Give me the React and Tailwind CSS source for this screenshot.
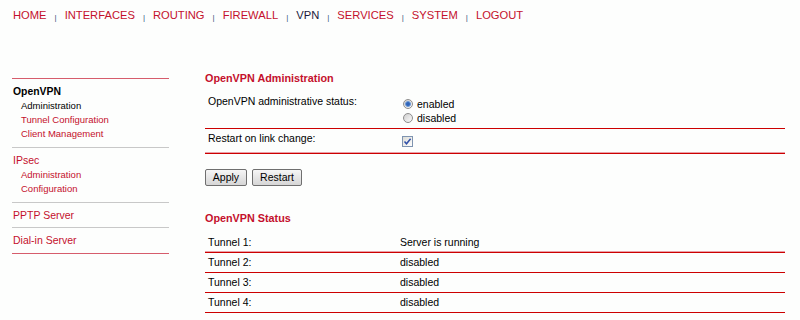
import React, { Fragment } from "react";

const NAV = ["HOME", "INTERFACES", "ROUTING", "FIREWALL", "VPN", "SERVICES", "SYSTEM", "LOGOUT"];

function Radio({ checked }) {
  return (
    <span className="w-[10px] h-[10px] rounded-full border border-[#8e8e8e] bg-gradient-to-br from-[#cfcfcf] to-[#fbfbfb] flex items-center justify-center shrink-0">
      {checked && <span className="w-[6px] h-[6px] rounded-full bg-[#2e64b8] border border-[#6d9ad8]" />}
    </span>
  );
}

function Checkbox() {
  return (
    <span className="w-[11px] h-[11px] border border-[#7f94b0] bg-gradient-to-br from-[#dcdcd6] to-[#ffffff] flex items-center justify-center">
      <svg width="9" height="9" viewBox="0 0 9 9">
        <path d="M1.5 4.5 L3.5 6.8 L7.6 1.8" fill="none" stroke="#2f4fa8" strokeWidth="1.5" />
      </svg>
    </span>
  );
}

function Button({ children, w }) {
  return (
    <button className={`${w} h-[17px] border border-[#6f6f6f] rounded-[2px] bg-gradient-to-b from-[#f6f6f6] to-[#d6d6d6] text-[10.5px] leading-[13px] text-black flex items-center justify-center`}>
      {children}
    </button>
  );
}

export default function App() {
  return (
    <div className="w-[800px] h-[320px] overflow-hidden bg-[#fdfefd] font-['Liberation_Sans',Arial,sans-serif] text-black">
      {/* top nav */}
      <div className="h-[70px] pl-[13px] pt-[8px] flex items-start text-[11.2px] leading-[14px]">
        {NAV.map((n, i) => (
          <Fragment key={n}>
            {i > 0 && (
              <span className="mx-[8px] inline-block translate-y-[3px] text-[8px] leading-[14px] text-[#2f4f80]">|</span>
            )}
            <span className={n === "VPN" ? "text-[#1b1b3c]" : "text-[#c4102c]"}>{n}</span>
          </Fragment>
        ))}
      </div>

      <div className="flex items-start">
        {/* sidebar */}
        <div className="ml-[12px] w-[157px] mt-[8px] border-t border-[#d65c6c]">
          <div className="pt-[5px] pb-[6px] border-b border-[#c8c8c8]">
            <div className="pl-[1px] font-bold text-[10.4px] leading-[15px] text-black">OpenVPN</div>
            <div className="pl-[9px] text-[9.5px] leading-[14px] text-black">Administration</div>
            <div className="pl-[9px] text-[9.5px] leading-[14px] text-[#c4102c]">Tunnel Configuration</div>
            <div className="pl-[9px] text-[9.5px] leading-[14px] text-[#c4102c]">Client Management</div>
          </div>
          <div className="pt-[5px] pb-[6px] border-b border-[#c8c8c8]">
            <div className="pl-[1px] text-[10.5px] leading-[15px] text-[#c4102c]">IPsec</div>
            <div className="pl-[9px] text-[9.5px] leading-[14px] text-[#c4102c]">Administration</div>
            <div className="pl-[9px] text-[9.5px] leading-[14px] text-[#c4102c]">Configuration</div>
          </div>
          <div className="pt-[5px] pb-[5px] border-b border-[#c8c8c8]">
            <div className="pl-[1px] text-[10.5px] leading-[14px] text-[#c4102c]">PPTP Server</div>
          </div>
          <div className="pt-[5px] pb-[6px] border-b border-[#d65c6c]">
            <div className="pl-[1px] text-[10.5px] leading-[14px] text-[#c4102c]">Dial-in Server</div>
          </div>
        </div>

        {/* main */}
        <div className="ml-[36px] w-[580px] text-[10.5px] leading-[13px]">
          <div className="pt-[1px] font-bold text-[10.8px] leading-[14px] text-[#c4102c]">OpenVPN Administration</div>

          <div className="mt-[4px]">
            <div className="flex h-[40px] box-border border-b border-[#cc0000]">
              <div className="w-[193px] pl-[3px] pt-[6px]">OpenVPN administrative status:</div>
              <div className="pl-[5px] pt-[8px]">
                <div className="flex items-center h-[14px] gap-[4px]">
                  <Radio checked />
                  <span>enabled</span>
                </div>
                <div className="flex items-center h-[14px] gap-[4px]">
                  <Radio />
                  <span>disabled</span>
                </div>
              </div>
            </div>
            <div className="flex h-[25px] box-border border-b border-[#cc0000] shadow-[inset_0_-1px_0_#eaa0a8]">
              <div className="w-[193px] pl-[3px] pt-[3px]">Restart on link change:</div>
              <div className="pl-[4px] pt-[7px]">
                <Checkbox />
              </div>
            </div>
          </div>

          <div className="mt-[15px] flex gap-[5px]">
            <Button w="w-[42px]">Apply</Button>
            <Button w="w-[50px]">Restart</Button>
          </div>

          <div className="mt-[25px] font-bold text-[10.8px] leading-[14px] text-[#c4102c]">OpenVPN Status</div>

          <div className="mt-[8px]">
            {[
              ["Tunnel 1:", "Server is running"],
              ["Tunnel 2:", "disabled"],
              ["Tunnel 3:", "disabled"],
              ["Tunnel 4:", "disabled"],
            ].map(([a, b], i) => (
              <div
                key={a}
                className={`flex h-[20px] box-border border-b border-[#cc0000] ${i === 0 ? "shadow-[inset_0_-1px_0_#eaa0a8]" : ""}`}
              >
                <div className="w-[193px] pl-[3px] pt-[3px]">{a}</div>
                <div className="pl-[2px] pt-[3px]">{b}</div>
              </div>
            ))}
          </div>
        </div>
      </div>
    </div>
  );
}
